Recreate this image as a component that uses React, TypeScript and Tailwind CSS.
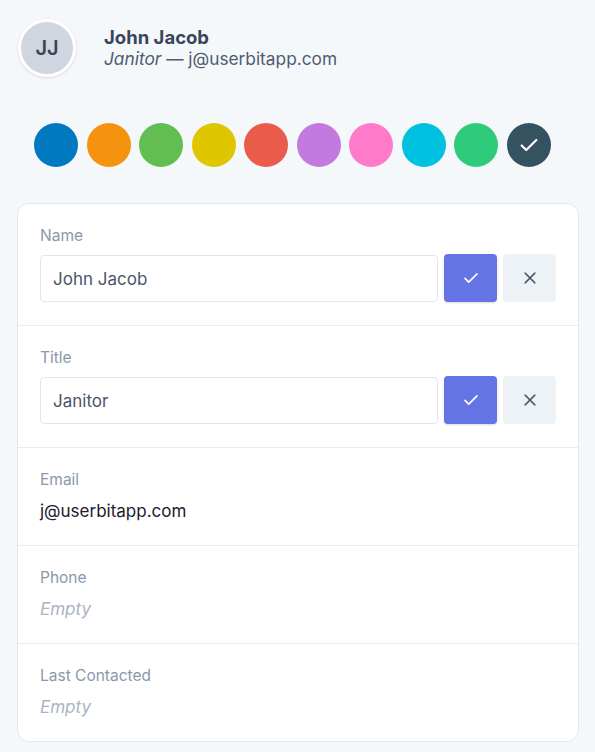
import React from 'react';

const COLORS = [
  '#0079c0',
  '#f5930f',
  '#62be51',
  '#e0c600',
  '#eb5b4b',
  '#c27ae0',
  '#ff7bca',
  '#00c2e0',
  '#2ecb7b',
  '#34525f',
];

function CheckIcon({ size = 14, stroke = 2 }: { size?: number; stroke?: number }) {
  return (
    <svg width={size} height={size} viewBox="0 0 24 24" fill="none" stroke="currentColor" strokeWidth={stroke} strokeLinecap="round" strokeLinejoin="round">
      <path d="M4 12.5l5 5L20 6.5" />
    </svg>
  );
}

function XIcon() {
  return (
    <svg width={18} height={18} viewBox="0 0 24 24" fill="none" stroke="currentColor" strokeWidth={1.9} strokeLinecap="round">
      <path d="M5.5 5.5l13 13M18.5 5.5l-13 13" />
    </svg>
  );
}

function EditField({ label, value }: { label: string; value: string }) {
  return (
    <div className="px-[22px] pt-[22px] pb-[23px] border-b border-[#e8edf3]">
      <div className="text-[15.5px] leading-5 text-[#8a97ab]">{label}</div>
      <div className="mt-[9px] flex gap-[6px]">
        <input
          defaultValue={value}
          className="flex-1 h-[47px] border border-[#dfe6ef] rounded-[4px] px-[12px] text-[17px] text-[#4a5568] outline-none bg-white"
        />
        <button className="w-[53px] h-[48px] -mt-px rounded-[4px] bg-[#6474e5] text-white flex items-center justify-center shadow-[0_1px_2px_rgba(0,0,0,0.15)]">
          <CheckIcon size={18} stroke={2.2} />
        </button>
        <button className="w-[53px] h-[48px] -mt-px rounded-[4px] bg-[#edf2f7] text-[#4a5568] flex items-center justify-center">
          <XIcon />
        </button>
      </div>
    </div>
  );
}

function ReadField({ label, value, last }: { label: string; value?: string; last?: boolean }) {
  return (
    <div className={`px-[22px] pt-[22px] pb-[22px] ${last ? '' : 'border-b border-[#e8edf3]'}`}>
      <div className="text-[15.5px] leading-5 text-[#8a97ab]">{label}</div>
      <div className="mt-[9px] text-[17px] leading-6">
        {value ? <span className="text-[#1a202c]">{value}</span> : <span className="italic text-[#a9b4c4]">Empty</span>}
      </div>
    </div>
  );
}

export default function App() {
  return (
    <div className="min-h-screen bg-[#f5f8fb] pl-[17px] pr-[16px] pt-[19px] font-['Inter',sans-serif]">
      {/* Header */}
      <div className="flex items-center pl-px">
        <div className="w-[58px] h-[58px] rounded-full border-[3px] border-white bg-[#d0d6df] flex items-center justify-center shadow-[0_1px_3px_rgba(0,0,0,0.12)]">
          <span className="text-[20px] font-semibold text-[#3a4454]">JJ</span>
        </div>
        <div className="ml-[28px]">
          <div className="text-[18.5px] leading-[22px] font-bold text-[#3a4558]">John Jacob</div>
          <div className="text-[17.3px] leading-[22px] text-[#4f5b6e]">
            <span className="italic">Janitor</span> — j@userbitapp.com
          </div>
        </div>
      </div>

      {/* Colors */}
      <div className="mt-[46px] px-[17px] flex gap-[8.5px]">
        {COLORS.map((c, i) => (
          <div
            key={c}
            className="w-[44px] h-[44px] rounded-full flex items-center justify-center text-white"
            style={{ backgroundColor: c }}
          >
            {i === COLORS.length - 1 && <CheckIcon size={22} stroke={2.4} />}
          </div>
        ))}
      </div>

      {/* Card */}
      <div className="mt-[36px] bg-white border border-[#e3e9f0] rounded-[12px]">
        <EditField label="Name" value="John Jacob" />
        <EditField label="Title" value="Janitor" />
        <ReadField label="Email" value="j@userbitapp.com" />
        <ReadField label="Phone" />
        <ReadField label="Last Contacted" last />
      </div>
    </div>
  );
}
